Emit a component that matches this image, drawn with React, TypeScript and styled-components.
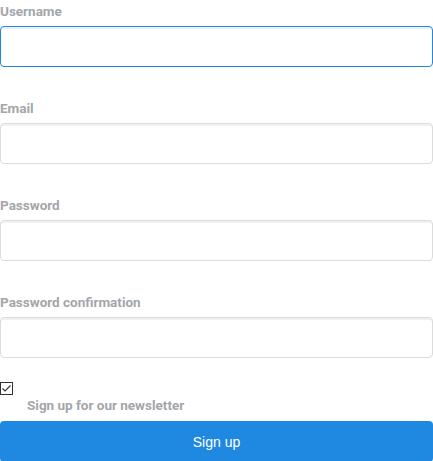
import React from "react"
import styled, { createGlobalStyle } from "styled-components"

const GlobalStyle = createGlobalStyle`
  body {
    margin: 0;
    background: #fff;
    font-family: Roboto, "Liberation Sans", sans-serif;
  }
`

const Form = styled.form`
  width: 433px;
  display: flex;
  flex-direction: column;
`

const Field = styled.div`
  display: flex;
  flex-direction: column;
  margin-bottom: 30px;
`

const Label = styled.label`
  font-family: Roboto, "Liberation Sans", sans-serif;
  font-weight: 700;
  font-size: 13.5px;
  line-height: 22px;
  color: #a3a6aa;
  margin-bottom: 4px;
`

const Input = styled.input<{ $focused?: boolean }>`
  box-sizing: border-box;
  width: 100%;
  height: 41px;
  margin: 0;
  padding: 0 12px;
  border: 1px solid ${(p) => (p.$focused ? "#2188e0" : "#dcdcdc")};
  border-radius: 4px;
  background: #fff;
  box-shadow: inset 0 2px 0 #f1f1f1;
  font-size: 14px;
  outline: none;
`

const CheckRow = styled.div`
  display: flex;
  flex-direction: column;
  margin-top: -6px;
`

const Box = styled.span`
  box-sizing: border-box;
  display: flex;
  align-items: center;
  justify-content: center;
  width: 13px;
  height: 13px;
  border: 1px solid #333;
  background: #fff;
`

const CheckLabel = styled.span`
  font-family: Roboto, "Liberation Sans", sans-serif;
  font-weight: 700;
  font-size: 13.5px;
  line-height: 16px;
  color: #a3a6aa;
  padding-left: 27px;
  margin-top: 2px;
`

const Button = styled.button`
  margin-top: 8px;
  height: 41px;
  width: 100%;
  border: none;
  border-radius: 4px;
  background: #1f88e0;
  color: #fff;
  font-family: "Liberation Sans", Arial, sans-serif;
  font-size: 14px;
`

const fields = [
  { label: "Username", focused: true },
  { label: "Email" },
  { label: "Password", type: "password" },
  { label: "Password confirmation", type: "password" },
]

export default function App() {
  return (
    <>
      <GlobalStyle />
      <Form onSubmit={(e) => e.preventDefault()}>
        {fields.map((f) => (
          <Field key={f.label}>
            <Label>{f.label}</Label>
            <Input type={f.type ?? "text"} $focused={f.focused} />
          </Field>
        ))}
        <CheckRow>
          <Box>
            <svg width="11" height="11" viewBox="0 0 11 11">
              <path d="M1.5 5.5 L4 8 L9.5 2.5" fill="none" stroke="#333" strokeWidth="1.1" />
            </svg>
          </Box>
          <CheckLabel>Sign up for our newsletter</CheckLabel>
        </CheckRow>
        <Button type="submit">Sign up</Button>
      </Form>
    </>
  )
}
